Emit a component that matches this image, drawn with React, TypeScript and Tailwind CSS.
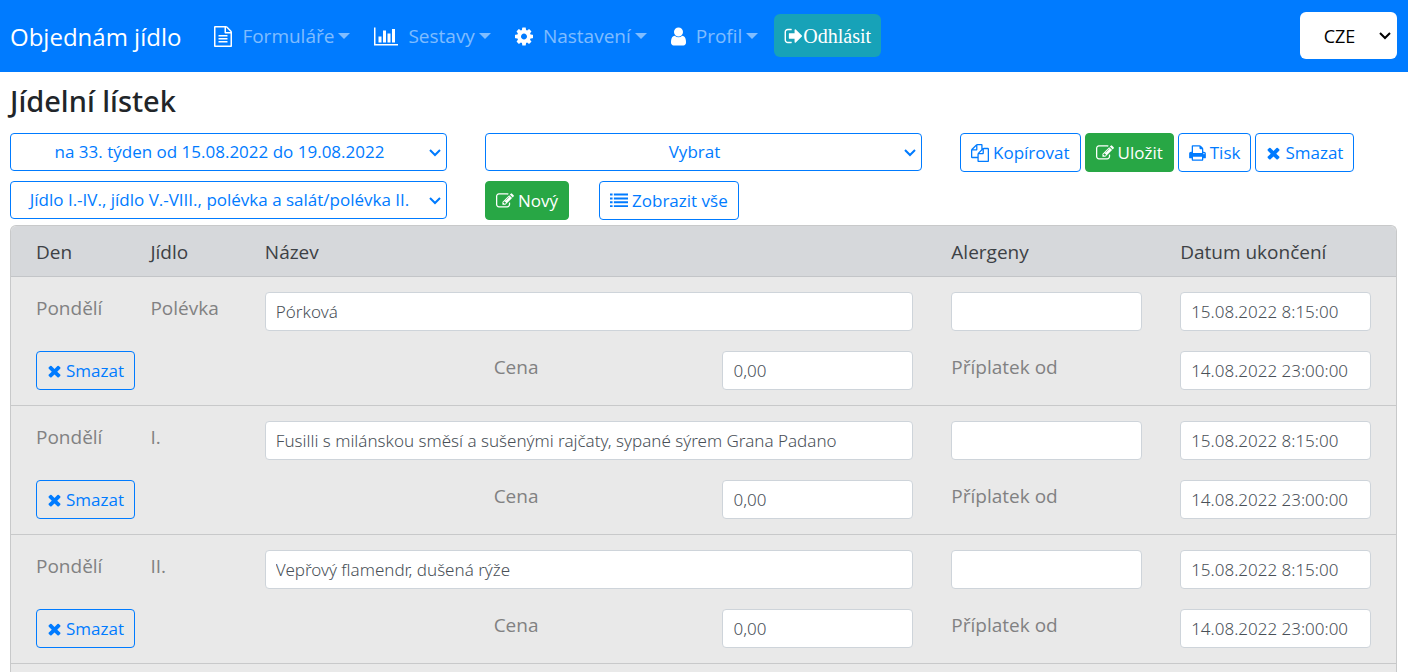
import React from "react";

type IconProps = { viewBox: string; d: string; className: string };

function Icon({ viewBox, d, className }: IconProps) {
  return (
    <svg viewBox={viewBox} fill="currentColor" aria-hidden="true" className={`shrink-0 ${className}`}>
      <path d={d} />
    </svg>
  );
}

const paths = {
  file: "M1596 380q28 28 48 76t20 88v1152q0 40-28 68t-68 28h-1344q-40 0-68-28t-28-68v-1600q0-40 28-68t68-28h896q40 0 88 20t76 48zm-444-244v376h376q-10-29-22-41l-313-313q-12-12-41-22zm384 1528v-1024h-416q-40 0-68-28t-28-68v-416h-768v1536h1280zm-1024-864q0-14 9-23t23-9h704q14 0 23 9t9 23v64q0 14-9 23t-23 9h-704q-14 0-23-9t-9-23v-64zm736 224q14 0 23 9t9 23v64q0 14-9 23t-23 9h-704q-14 0-23-9t-9-23v-64q0-14 9-23t23-9h704zm0 256q14 0 23 9t9 23v64q0 14-9 23t-23 9h-704q-14 0-23-9t-9-23v-64q0-14 9-23t23-9h704z",
  chart: "M640 896v512h-256v-512h256zm384-512v1024h-256v-1024h256zm1024 1152v128h-2048v-1536h128v1408h1920zm-640-896v768h-256v-768h256zm384-384v1152h-256v-1152h256z",
  cog: "M1152 896q0-106-75-181t-181-75-181 75-75 181 75 181 181 75 181-75 75-181zm512-109v222q0 12-8 23t-20 13l-185 28q-19 54-39 91 35 50 107 138 10 12 10 25t-9 23q-27 37-99 108t-94 71q-12 0-26-9l-138-108q-44 23-91 38-16 136-29 186-7 28-36 28h-222q-14 0-24.5-8.5t-11.5-21.5l-28-184q-49-16-90-37l-141 107q-10 9-25 9-14 0-25-11-126-114-165-168-7-10-7-23 0-12 8-23 15-21 51-66.5t54-70.5q-27-50-41-99l-183-27q-13-2-21-12.5t-8-23.5v-222q0-12 8-23t19-13l186-28q14-46 39-92-40-57-107-138-10-12-10-24 0-10 9-23 26-36 98.5-107.5t94.5-71.5q13 0 26 10l138 107q44-23 91-38 16-136 29-186 7-28 36-28h222q14 0 24.5 8.5t11.5 21.5l28 184q49 16 90 37l142-107q9-9 24-9 13 0 25 10 129 119 165 170 7 8 7 22 0 12-8 23-15 21-51 66.5t-54 70.5q26 50 41 98l183 28q13 2 21 12.5t8 23.5z",
  user: "M1536 1399q0 109-62.5 187t-150.5 78h-854q-88 0-150.5-78t-62.5-187q0-85 8.5-160.5t31.5-152 58.5-131 94-89 134.5-34.5q131 128 313 128t313-128q76 0 134.5 34.5t94 89 58.5 131 31.5 152 8.5 160.5zm-256-887q0 159-112.5 271.5t-271.5 112.5-271.5-112.5-112.5-271.5 112.5-271.5 271.5-112.5 271.5 112.5 112.5 271.5z",
  signOut: "M704 1440q0 4 1 20t.5 26.5-3 23.5-10 19.5-20.5 6.5h-320q-119 0-203.5-84.5t-84.5-203.5v-704q0-119 84.5-203.5t203.5-84.5h320q13 0 22.5 9.5t9.5 22.5q0 4 1 20t.5 26.5-3 23.5-10 19.5-20.5 6.5h-320q-66 0-113 47t-47 113v704q0 66 47 113t113 47h312l11.5 1 11.5 3 8 5.5 7 9 2 13.5zm928-544q0 26-19 45l-544 544q-19 19-45 19t-45-19-19-45v-288h-448q-26 0-45-19t-19-45v-384q0-26 19-45t45-19h448v-288q0-26 19-45t45-19 45 19l544 544q19 19 19 45z",
  copy: "M1696 384q40 0 68 28t28 68v1216q0 40-28 68t-68 28h-960q-40 0-68-28t-28-68v-288h-544q-40 0-68-28t-28-68v-672q0-40 20-88t48-76l408-408q28-28 76-48t88-20h416q40 0 68 28t28 68v328q68-40 128-40h416zm-544 213l-299 299h299v-299zm-640-384l-299 299h299v-299zm196 647l316-316v-416h-384v416q0 40-28 68t-68 28h-416v640h512v-256q0-40 20-88t48-76zm956 804v-1152h-384v416q0 40-28 68t-68 28h-416v640h896z",
  edit: "M888 1184l116-116-152-152-116 116v56h96v96h56zm440-720q-16-16-33 1l-350 350q-17 17-1 33t33-1l350-350q17-17 1-33zm80 594v190q0 119-84.5 203.5t-203.5 84.5h-832q-119 0-203.5-84.5t-84.5-203.5v-832q0-119 84.5-203.5t203.5-84.5h832q63 0 117 25 15 7 18 23 3 17-9 29l-49 49q-14 14-32 8-23-6-45-6h-832q-66 0-113 47t-47 113v832q0 66 47 113t113 47h832q66 0 113-47t47-113v-126q0-13 9-22l64-64q15-15 35-7t20 29zm-96-738l288 288-672 672h-288v-288zm444 132l-92 92-288-288 92-92q28-28 68-28t68 28l152 152q28 28 28 68t-28 68z",
  print: "M448 1536h896v-256h-896v256zm0-640h896v-384h-160q-40 0-68-28t-28-68v-160h-640v640zm1152 64q0-26-19-45t-45-19-45 19-19 45 19 45 45 19 45-19 19-45zm128 0v416q0 13-9.5 22.5t-22.5 9.5h-224v160q0 40-28 68t-68 28h-960q-40 0-68-28t-28-68v-160h-224q-13 0-22.5-9.5t-9.5-22.5v-416q0-79 56.5-135.5t135.5-56.5h64v-544q0-40 28-68t68-28h672q40 0 88 20t76 48l152 152q28 28 48 76t20 88v256h64q79 0 135.5 56.5t56.5 135.5z",
  times: "M1490 1322q0 40-28 68l-136 136q-28 28-68 28t-68-28l-294-294-294 294q-28 28-68 28t-68-28l-136-136q-28-28-28-68t28-68l294-294-294-294q-28-28-28-68t28-68l136-136q28-28 68-28t68 28l294 294 294-294q28-28 68-28t68 28l136 136q28 28 28 68t-28 68l-294 294 294 294q28 28 28 68z",
  list: "M0 160h256v192h-256zM384 160h1408v192h-1408zM0 544h256v192h-256zM384 544h1408v192h-1408zM0 928h256v192h-256zM384 928h1408v192h-1408zM0 1312h256v192h-256zM384 1312h1408v192h-1408z",
};

const menu = [
  { label: "Formuláře", d: paths.file, box: "128 0 1536 1792", size: "h-[21px] w-[18px]" },
  { label: "Sestavy", d: paths.chart, box: "0 0 2048 1792", size: "h-[21px] w-6" },
  { label: "Nastavení", d: paths.cog, box: "128 0 1536 1792", size: "h-[21px] w-[18px]" },
  { label: "Profil", d: paths.user, box: "256 0 1280 1792", size: "h-[21px] w-[15px]" },
];

const outline =
  "flex h-[39px] items-center gap-1 rounded border border-[#007bff] px-[10px] text-[17px] text-[#007bff] whitespace-nowrap";
const solid =
  "flex h-[39px] items-center gap-1 rounded border border-[#28a745] bg-[#28a745] px-[10px] text-[17px] text-white whitespace-nowrap";
const field =
  "h-[39px] w-full min-w-0 rounded border border-[#ced4da] bg-white px-[10px] font-['Noto_Sans','Open_Sans',sans-serif] text-[17px] font-[350] text-[#495057]";

function Select({ label, value, box, look }: { label: string; value: string; box: string; look: string }) {
  return (
    <div className={`relative ${box}`}>
      <select
        aria-label={label}
        className={`w-full appearance-none bg-white pr-7 pl-[10px] text-center [text-align-last:center] ${look}`}
      >
        <option>{value}</option>
      </select>
      <svg
        viewBox="0 0 12 8"
        fill="none"
        stroke="currentColor"
        strokeWidth="2"
        aria-hidden="true"
        className="pointer-events-none absolute inset-y-0 right-[6px] my-auto h-2 w-3"
      >
        <path d="M1 1l5 5 5-5" />
      </svg>
    </div>
  );
}

const blueSelect = "h-[38px] rounded border border-[#007bff] text-[17px]";

function DeleteButton() {
  return (
    <button type="button" className={outline}>
      <Icon viewBox="192 0 1408 1792" d={paths.times} className="h-[18px] w-[15px]" />
      Smazat
    </button>
  );
}

const meals = [
  { meal: "Polévka", name: "Pórková" },
  { meal: "I.", name: "Fusilli s milánskou směsí a sušenými rajčaty, sypané sýrem Grana Padano" },
  { meal: "II.", name: "Vepřový flamendr, dušená rýže" },
];

function MealRow({ meal, name, index }: { meal: string; name: string; index: number }) {
  const id = `meal-${index}`;
  return (
    <li className="grid grid-cols-12 gap-x-[38px] gap-y-5 border-b border-[#c8c9ca] px-[25px] py-[15px] text-[19px] leading-8 text-[#818182]">
      <span>Pondělí</span>
      <label htmlFor={`${id}-name`}>{meal}</label>
      <input id={`${id}-name`} defaultValue={name} className={`${field} col-span-6`} />
      <input aria-label="Alergeny" className={`${field} col-span-2`} />
      <input aria-label="Datum ukončení" defaultValue="15.08.2022 8:15:00" className={`${field} col-span-2`} />
      <div className="col-span-4 flex">
        <DeleteButton />
      </div>
      <label htmlFor={`${id}-price`} className="col-span-2">Cena</label>
      <input id={`${id}-price`} defaultValue="0,00" className={`${field} col-span-2`} />
      <label htmlFor={`${id}-from`} className="col-span-2">Příplatek od</label>
      <input id={`${id}-from`} defaultValue="14.08.2022 23:00:00" className={`${field} col-span-2`} />
    </li>
  );
}

export default function App() {
  return (
    <div className="bg-white font-['Open_Sans',sans-serif] text-[#212529]">
      <nav className="flex h-[72px] items-center bg-[#007bff] pr-[11px] pb-px pl-[10px]">
        <a href="#" className="mr-[33px] pt-[2px] text-2xl whitespace-nowrap text-white">Objednám jídlo</a>
        <ul className="flex items-center gap-6 pt-px">
          {menu.map((m) => (
            <li key={m.label}>
              <a href="#" className="flex items-center text-[19px] whitespace-nowrap text-white/50">
                <Icon viewBox={m.box} d={m.d} className={`mr-[10px] text-white ${m.size}`} />
                {m.label}
                <span className="ml-1 border-x-[6px] border-t-[6px] border-x-transparent border-t-white/50" />
              </a>
            </li>
          ))}
        </ul>
        <button
          type="button"
          className="ml-4 flex h-[43px] items-center rounded-md bg-[#17a2b8] px-[10px] font-['Liberation_Serif',serif] text-xl text-white"
        >
          <Icon viewBox="64 0 1600 1792" d={paths.signOut} className="h-5 w-[19px]" />
          Odhlásit
        </button>
        <Select
          label="Jazyk"
          value="CZE"
          box="ml-auto w-[97px] text-black"
          look="h-[47px] rounded-md text-lg"
        />
      </nav>

      <main className="pr-[11px] pl-[10px]">
        <h1 className="pt-[11px] text-[29px] leading-9 font-medium font-['Noto_Sans','Open_Sans',sans-serif]">Jídelní lístek</h1>
        <div className="grid grid-cols-3 gap-x-[38px] gap-y-[9px] pt-[14px] pb-[5px]">
          <Select
            label="Týden"
            value="na 33. týden od 15.08.2022 do 19.08.2022"
            box="text-[#007bff]"
            look={blueSelect}
          />
          <Select label="Šablona" value="Vybrat" box="text-[#007bff]" look={blueSelect} />
          <div className="flex gap-1">
            <button type="button" className={outline}>
              <Icon viewBox="0 0 1792 1792" d={paths.copy} className="size-[18px]" />
              Kopírovat
            </button>
            <button type="button" className={solid}>
              <Icon viewBox="0 0 1792 1792" d={paths.edit} className="size-[18px]" />
              Uložit
            </button>
            <button type="button" className={outline}>
              <Icon viewBox="64 0 1664 1792" d={paths.print} className="h-[18px] w-[17px]" />
              Tisk
            </button>
            <DeleteButton />
          </div>
          <Select
            label="Druh jídla"
            value="Jídlo I.-IV., jídlo V.-VIII., polévka a salát/polévka II."
            box="text-[#007bff]"
            look={blueSelect}
          />
          <div className="flex gap-[30px]">
            <button type="button" className={solid}>
              <Icon viewBox="0 0 1792 1792" d={paths.edit} className="size-[18px]" />
              Nový
            </button>
            <button type="button" className={outline}>
              <Icon viewBox="0 0 1792 1792" d={paths.list} className="size-[18px]" />
              Zobrazit vše
            </button>
          </div>
        </div>

        <section className="rounded-t-md border border-b-0 border-[#c8c9ca] bg-[#e9e9e9]">
          <header className="grid h-[51px] grid-cols-12 items-center gap-x-[38px] rounded-t-md border-b border-[#c3c5c8] bg-[#d6d8db] px-[25px] pt-[2px] text-[19px] text-[#3d4145]">
            <span>Den</span>
            <span>Jídlo</span>
            <span className="col-span-6">Název</span>
            <span className="col-span-2">Alergeny</span>
            <span className="col-span-2 whitespace-nowrap">Datum ukončení</span>
          </header>
          <ul>
            {meals.map((m, i) => (
              <MealRow key={m.meal} meal={m.meal} name={m.name} index={i} />
            ))}
          </ul>
          <div className="h-2" />
        </section>
      </main>
    </div>
  );
}
